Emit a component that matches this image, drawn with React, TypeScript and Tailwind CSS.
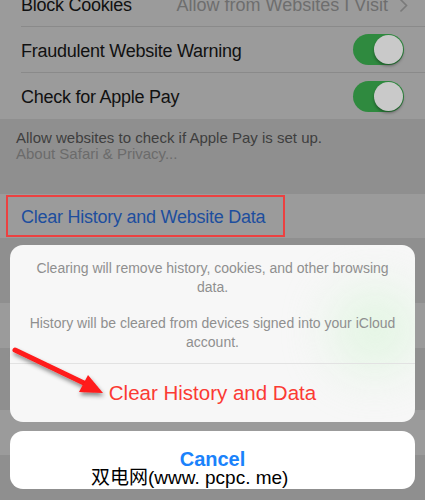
import React from "react";

const Toggle = () => (
  <div className="relative h-[31px] w-[51px] rounded-full bg-[#2f8a3f]">
    <div className="absolute right-[1px] top-[1px] h-[29px] w-[29px] rounded-full bg-[#c9c9c9] shadow-[0_2px_3px_rgba(0,0,0,0.35)]" />
  </div>
);

const Row = ({ children, last }: { children?: React.ReactNode; last?: boolean }) => (
  <div className="flex h-[46px] items-center bg-[#9b9b9b] pl-[21px]">
    <div className={"flex h-full flex-1 items-center pr-[21px] " + (last ? "" : "border-b border-[#8a8a8a]")}>
      {children}
    </div>
  </div>
);

const label = "pt-[3px] text-[18px] tracking-[-0.25px] text-[#111]";

const App = () => {
  return (
    <div className="relative h-[500px] w-[425px] overflow-hidden bg-[#8f8f8f] font-['Liberation_Sans','Noto_Sans_CJK_SC',sans-serif]">
      {/* settings list behind the sheet */}
      <div className="-mt-[19px] flex flex-col">
        <Row>
          <span className={label}>Block Cookies</span>
          <span className="ml-auto pt-[3px] text-[18px] text-[#6e6e6e]">Allow from Websites I Visit</span>
          <svg width="9" height="15" viewBox="0 0 9 15" className="ml-[11px] -mr-[4px] mt-[3px]">
            <path d="M1.5 1.5l6 6-6 6" fill="none" stroke="#7a7a7a" strokeWidth="1.6" />
          </svg>
        </Row>
        <Row>
          <span className={label}>Fraudulent Website Warning</span>
          <div className="ml-auto"><Toggle /></div>
        </Row>
        <Row last>
          <span className={label}>Check for Apple Pay</span>
          <div className="ml-auto"><Toggle /></div>
        </Row>
        <div className="h-[75px] px-[16px] pt-[11px] text-[15px] leading-[16px]">
          <div className="text-[#3e3e3e]">Allow websites to check if Apple Pay is set up.</div>
          <div className="text-[#6b6b6b]">About Safari &amp; Privacy...</div>
        </div>
        <div className="flex h-[44px] items-center bg-[#9b9b9b] px-[6px]">
          <div className="flex h-[42px] w-[279px] items-center whitespace-nowrap border-2 border-[#ec4141] pl-[13px] pt-[2px] text-[18px] tracking-[-0.25px] text-[#1d4e9e]">
            Clear History and Website Data
          </div>
        </div>
        <div className="h-[65px]" />
        <div className="h-[45px] bg-[#9b9b9b]" />
        <div className="h-[62px]" />
        <div className="h-[45px] bg-[#9b9b9b]" />
      </div>

      {/* action sheet */}
      <div className="absolute inset-x-0 bottom-0 flex flex-col gap-[9px] px-[10px] pb-[11px]">
        <div className="relative overflow-hidden rounded-[13px] bg-[#f7f7f7]">
          <div className="absolute left-[320px] top-[40px] h-[90px] w-[90px] rounded-full bg-[#d8f5d8] opacity-60 blur-xl" />
          <div className="relative flex h-[119px] flex-col items-center border-b border-[#e2e2e2] px-[18px] pt-[14px] text-center text-[14px] leading-[19px] text-[#8f8f8f]">
            <div>Clearing will remove history, cookies, and other browsing data.</div>
            <div className="mt-[17px]">History will be cleared from devices signed into your iCloud account.</div>
          </div>
          <div className="relative flex h-[58px] items-center justify-center text-[20.5px] text-[#fb3a33]">
            Clear History and Data
          </div>
        </div>
        <div className="flex h-[58px] items-center justify-center rounded-[13px] bg-white pb-[3px] text-[20px] font-semibold text-[#1a82fb]">
          Cancel
        </div>
      </div>

      {/* annotation arrow */}
      <svg className="absolute left-0 top-[335px]" width="120" height="70" viewBox="0 335 120 70">
        <defs>
          <filter id="sh" x="-20%" y="-20%" width="140%" height="160%">
            <feDropShadow dx="1" dy="3" stdDeviation="2" floodColor="#000" floodOpacity="0.45" />
          </filter>
        </defs>
        <g filter="url(#sh)">
          <line x1="15" y1="350" x2="86" y2="384" stroke="#ff1a1a" strokeWidth="5" strokeLinecap="round" />
          <polygon points="88,375 103,393 79,392" fill="#ff1a1a" />
        </g>
      </svg>

      {/* watermark */}
      <div className="absolute left-[91px] top-[467px] whitespace-nowrap text-[19px] leading-[22px] text-black [text-shadow:0_0_2px_#fff,0_0_2px_#fff]">
        双电网(www. pcpc. me)
      </div>
    </div>
  );
};

export default App;
